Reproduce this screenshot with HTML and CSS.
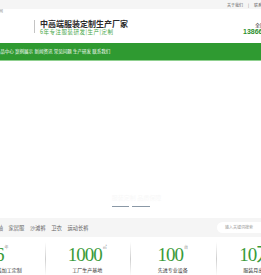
FILE: index.html
```html
<!DOCTYPE html>
<html>
<head>
    <meta charset="utf-8">
    <meta name="viewport" content="width=device-width, initial-scale=1.0">
    <title>中高端服装定制生产厂家</title>
    <link rel="stylesheet" href="styles.css">
</head>
<body>
<div class="topbar">
    <div class="wrap">
        <div class="top-links">关于我们<span class="sep">|</span>联系我们</div>
    </div>
</div>
<div class="header">
    <div class="wrap">
        <div class="logo">中高端服装定制网</div>
        <div class="line"></div>
        <div class="slogan">
            <h1>中高端服装定制生产厂家</h1>
            <p>6年专注服装研发|生产|定制</p>
        </div>
        <div class="tel">
            <span>全国服务热线</span>
            <strong>13866668888</strong>
        </div>
    </div>
</div>
<div class="nav">
    <ul class="wrap">
        <li>网站首页</li>
        <li>产品中心</li>
        <li>案例展示</li>
        <li>新闻资讯</li>
        <li>常见问题</li>
        <li>生产研发</li>
        <li>联系我们</li>
    </ul>
</div>
<!-- 轮播图 -->
<div class="banner">
    <p class="banner-tip">服装定制 品质保障</p>
    <div class="dots"><i></i><i></i></div>
</div>
<div class="search-bar">
    <div class="wrap">
        <div class="hot">
            <span>短袖</span>
            <span>家居服</span>
            <span>沙滩裤</span>
            <span>卫衣</span>
            <span>运动长裤</span>
        </div>
        <div class="search-box">输入关键词搜索</div>
    </div>
</div>
<div class="stats">
    <div class="wrap">
        <div class="item"><b>6<sup>年</sup></b><p>专注服装加工定制</p></div>
        <div class="item"><b>1000<sup>㎡</sup></b><p>工厂生产基地</p></div>
        <div class="item"><b>100<sup>台</sup></b><p>先进专业设备</p></div>
        <div class="item"><b>10万<sup>+</sup></b><p>服装月出货量</p></div>
    </div>
</div>
</body>
</html>
```

FILE: styles.css
```css
*{ box-sizing: border-box; }
html, body{
    margin: 0;
    padding: 0;
}
body{
    background: #fff;
    color: #333;
    font-family: "Noto Sans CJK SC", "Noto Sans", sans-serif;
    overflow: hidden;
}
ul, p, h1{ margin: 0; padding: 0; list-style: none; }

/* 居中容器，比窗口宽 */
.wrap{
    display: flex;
    width: 342px;
    margin-left: -41px;
}

.topbar{ height: 9px; background: #f5f5f5; }
.topbar .wrap{ height: 9px; align-items: center; }
.top-links{
    margin-left: 268px;
    font-size: 4px; line-height: 4px; color: #666;
    white-space: nowrap;
}
.top-links .sep{ margin: 0 5px; }

.header .wrap{ height: 34px; align-items: flex-start; }
.logo{
    flex: none;
    width: 75px; padding-left: 12px;
    font-size: 4px; line-height: 4px; color: #999;
    white-space: nowrap; overflow: hidden;
}
.line{ flex: none; width: 1px; height: 13px; margin-top: 11px; background: #c4c4c4; }
.slogan{ margin: 9.5px 0 0 5px; white-space: nowrap; }
.slogan h1{ font-size: 8px; line-height: 10px; font-weight: bold; color: #2b2b2b; }
.slogan p{ font-size: 5.5px; line-height: 6px; letter-spacing: .5px; color: #4aa84a; }
.tel{ width: 58px; margin: 12.5px 0 0 auto; white-space: nowrap; }
.tel span{ display: block; padding-left: 12px; font-size: 5px; line-height: 6px; color: #333; }
.tel strong{
    display: block;
    font-family: "Liberation Sans", Arial, sans-serif;
    font-size: 7px; line-height: 8px; color: #2c8f2c;
}

.nav{ background: #2f9a31; border-bottom: 1px solid #8fd08f; }
.nav .wrap{ height: 17px; align-items: center; gap: 1.3px; padding-left: 17.5px; }
.nav li{ font-size: 4.5px; line-height: 5px; color: #fff; white-space: nowrap; }

.banner{
    height: 157px;
    display: flex; flex-direction: column; align-items: center; justify-content: flex-end;
    padding-bottom: 11px;
}
.banner-tip{ margin: 0 0 5px 12px; font-size: 6px; line-height: 7px; color: #f8f8f8; }
.dots{ display: flex; gap: 3px; }
.dots i{ display: block; width: 17px; height: 1px; background: #8a98a6; }
.dots i + i{ width: 18px; }

.search-bar{ height: 19px; background: #f5f5f5; }
.search-bar .wrap{ height: 19px; align-items: center; }
.hot{ display: flex; gap: 5.5px; padding-left: 33.4px; white-space: nowrap; }
.hot span{ font-size: 5.3px; line-height: 6px; color: #666; }
.search-box{
    width: 70px; height: 11px;
    margin: 0 14px 0 auto; padding-left: 8px;
    border-radius: 6px; background: #fff;
    font-size: 4px; line-height: 11px; color: #999;
}

.stats .wrap{ height: 38px; }
.stats .item{
    flex: 1;
    padding-top: 8px;
    text-align: center;
    white-space: nowrap;
}
.stats .item + .item{
    background: linear-gradient(to bottom, rgba(220,220,220,0), #cfcfcf, rgba(220,220,220,0)) no-repeat 0 5px / 1px 34px;
}
.stats b{
    display: block;
    font-family: "Liberation Serif", "Noto Sans CJK SC", serif;
    font-size: 19px; line-height: 20px; font-weight: normal;
    letter-spacing: -1px; color: #3a9b3a;
}
.stats sup{
    font-family: "Noto Sans CJK SC", sans-serif;
    font-size: 4px; line-height: 4px; letter-spacing: 0;
    vertical-align: top; margin-left: 1px; color: #888;
}
.stats .item p{ margin-top: 2px; font-size: 5px; line-height: 6px; color: #333; }
```
